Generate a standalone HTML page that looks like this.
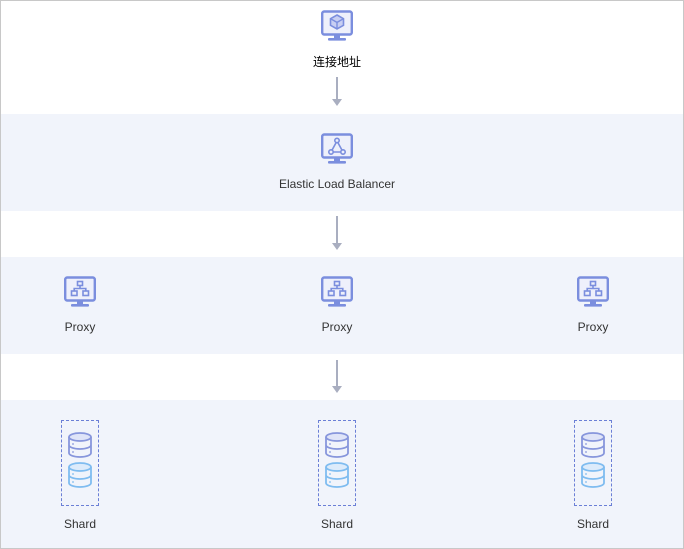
<!DOCTYPE html>
<html><head><meta charset="utf-8"><style>
body{margin:0;width:684px;height:549px;position:relative;background:#fff;font-family:"Liberation Sans","Noto Sans CJK SC",sans-serif;overflow:hidden}
.frame{position:absolute;left:0;top:0;width:682px;height:547px;border:1px solid #c8c8c8}
.band{position:absolute;left:1px;width:682px;background:#f1f4fb}
.lbl{position:absolute;width:200px;text-align:center;font-size:12px;color:#333}
.ic{position:absolute}
.arrow{position:absolute;left:336px;width:2px;background:#a9aec0}
.arrow:after{content:"";position:absolute;left:-4px;bottom:-2px;border-left:5px solid transparent;border-right:5px solid transparent;border-top:7px solid #a9aec0}
.dash{position:absolute;width:36px;height:84px;border:1px dashed #6b7fd6}
</style></head><body>
<div class="frame"></div>
<div class="band" style="top:114px;height:97px"></div>
<div class="band" style="top:257px;height:97px"></div>
<div class="band" style="top:400px;height:148px"></div>

<svg width="0" height="0" style="position:absolute"><defs>
<g id="mon"><rect x="1.2" y="1.5" width="29.6" height="23" rx="2" fill="#eef0fb" stroke="#7b8ede" stroke-width="2.4"/><rect x="13" y="24" width="6" height="4" fill="#7b8ede"/><rect x="7" y="28" width="18" height="2.6" rx="1" fill="#7b8ede"/></g>
<g id="db"><ellipse cx="16" cy="5" rx="11" ry="4" fill="#dfe4f8" stroke="#8796dc" stroke-width="1.8"/><path d="M5 5v16c0 2.2 5 4 11 4s11-1.8 11-4V5M5 13c0 2.2 5 4 11 4s11-1.8 11-4" fill="none" stroke="#8796dc" stroke-width="1.8"/><circle cx="9" cy="12" r=".9" fill="#8796dc"/><circle cx="9" cy="20" r=".9" fill="#8796dc"/></g>
<g id="db2"><ellipse cx="16" cy="5" rx="11" ry="4" fill="#dcebfb" stroke="#7fbcf0" stroke-width="1.8"/><path d="M5 5v16c0 2.2 5 4 11 4s11-1.8 11-4V5M5 13c0 2.2 5 4 11 4s11-1.8 11-4" fill="none" stroke="#7fbcf0" stroke-width="1.8"/><circle cx="9" cy="12" r=".9" fill="#7fbcf0"/><circle cx="9" cy="20" r=".9" fill="#7fbcf0"/></g>
<g id="proxy"><use href="#mon"/><g fill="none" stroke="#7b8ede" stroke-width="1.6"><rect x="13.5" y="5.5" width="5" height="4"/><rect x="7.5" y="15" width="5.5" height="4.5"/><rect x="19" y="15" width="5.5" height="4.5"/><path d="M16 9.5v3M10.2 15v-2.5h11.6V15"/></g></g>
</defs></svg>

<svg class="ic" style="left:321px;top:10px" width="32" height="32"><use href="#mon"/><path d="M16 5l6.5 3.7v6.6L16 19l-6.5-3.7V8.7z" fill="#c8cff3" stroke="#7b8ede" stroke-width="1.6"/><path d="M9.5 8.7l6.5 3.7 6.5-3.7M16 12.4V19" fill="none" stroke="#7b8ede" stroke-width="1.4"/></svg>
<div class="lbl" style="left:237px;top:53px;color:#000">连接地址</div>
<div class="arrow" style="top:77px;height:27px"></div>

<svg class="ic" style="left:321px;top:133px" width="32" height="32"><use href="#mon"/><g fill="none" stroke="#7b8ede" stroke-width="1.6"><path d="M16 8l-6 11h12z"/><circle cx="16" cy="7.5" r="2.2" fill="#eef0fb"/><circle cx="10" cy="19" r="2.2" fill="#eef0fb"/><circle cx="22" cy="19" r="2.2" fill="#eef0fb"/></g></svg>
<div class="lbl" style="left:237px;top:177px">Elastic Load Balancer</div>
<div class="arrow" style="top:216px;height:32px"></div>

<svg class="ic" style="left:64px;top:276px" width="32" height="32"><use href="#proxy"/></svg>
<svg class="ic" style="left:321px;top:276px" width="32" height="32"><use href="#proxy"/></svg>
<svg class="ic" style="left:577px;top:276px" width="32" height="32"><use href="#proxy"/></svg>
<div class="lbl" style="left:-20px;top:320px">Proxy</div>
<div class="lbl" style="left:237px;top:320px">Proxy</div>
<div class="lbl" style="left:493px;top:320px">Proxy</div>
<div class="arrow" style="top:360px;height:31px"></div>

<div class="dash" style="left:61px;top:420px"></div>
<div class="dash" style="left:318px;top:420px"></div>
<div class="dash" style="left:574px;top:420px"></div>
<svg class="ic" style="left:64px;top:432px" width="32" height="62"><use href="#db"/><use href="#db2" y="30"/></svg>
<svg class="ic" style="left:321px;top:432px" width="32" height="62"><use href="#db"/><use href="#db2" y="30"/></svg>
<svg class="ic" style="left:577px;top:432px" width="32" height="62"><use href="#db"/><use href="#db2" y="30"/></svg>
<div class="lbl" style="left:-20px;top:517px">Shard</div>
<div class="lbl" style="left:237px;top:517px">Shard</div>
<div class="lbl" style="left:493px;top:517px">Shard</div>
</body></html>
